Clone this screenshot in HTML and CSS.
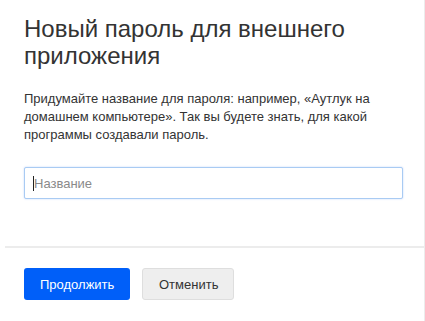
FILE: index.html
```html
<!DOCTYPE html>
<html lang="ru">
  <head>
    <meta charset="UTF-8" />
    <meta name="viewport" content="width=device-width, initial-scale=1.0" />
    <title>Новый пароль для внешнего приложения</title>
    <link rel="stylesheet" href="styles.css">
  </head>
  <body>
    <div class="dialog">
      <div class="dialog-body">
        <h2>Новый пароль для внешнего приложения</h2>
        <p class="hint">
          Придумайте название для пароля: например, «Аутлук на домашнем
          компьютере». Так вы будете знать, для какой программы создавали
          пароль.
        </p>
        <div class="field">
          <span class="caret"></span>
          <input type="text" class="name-input" placeholder="Название" />
        </div>
      </div>
      <div class="dialog-footer">
        <button class="btn btn-primary">Продолжить</button>
        <button class="btn btn-secondary">Отменить</button>
      </div>
    </div>
  </body>
</html>
```

FILE: styles.css
```css
body {
  font-family: "Liberation Sans", Arial, sans-serif;
  background-color: #fff;
  margin: 0;
  padding: 0;
}
.dialog {
  width: 424px;
  height: 321px;
  border-right: 1px solid #ececec;
}
.dialog-body {
  padding: 15px 21px 47px 24px;
}
h2 {
  font-size: 24px;
  font-weight: normal;
  line-height: 27px;
  color: #333;
  margin: 0 0 21px 0;
}
.hint {
  font-size: 13px;
  line-height: 18px;
  color: #333;
  margin: 0 0 23px 0;
}
.field {
  position: relative;
}
/* text cursor shown in the focused field */
.caret {
  position: absolute;
  left: 9px;
  top: 9px;
  width: 1px;
  height: 15px;
  background-color: #222;
}
.name-input {
  display: block;
  width: 100%;
  height: 32px;
  padding: 0 9px;
  border: 1px solid #a9cbf3;
  border-radius: 2px;
  box-shadow: 0 0 2px rgba(0, 95, 249, 0.25);
  box-sizing: border-box;
  font-family: inherit;
  font-size: 13px;
  color: #333;
  outline: none;
}
.name-input::placeholder {
  color: #8a8a8a;
}
.dialog-footer {
  margin-left: 5px;
  border-top: 2px solid #ececec;
  padding: 20px 19px;
  display: flex;
  gap: 12px;
}
.btn {
  height: 32px;
  padding: 0 16px;
  border-radius: 3px;
  font-family: inherit;
  font-size: 13px;
  cursor: pointer;
}
.btn-primary {
  background-color: #005ff9;
  color: #fff;
  border: none;
  width: 106px;
}
.btn-secondary {
  background-color: #eee;
  color: #333;
  border: 1px solid #dedede;
  width: 92px;
}
```
